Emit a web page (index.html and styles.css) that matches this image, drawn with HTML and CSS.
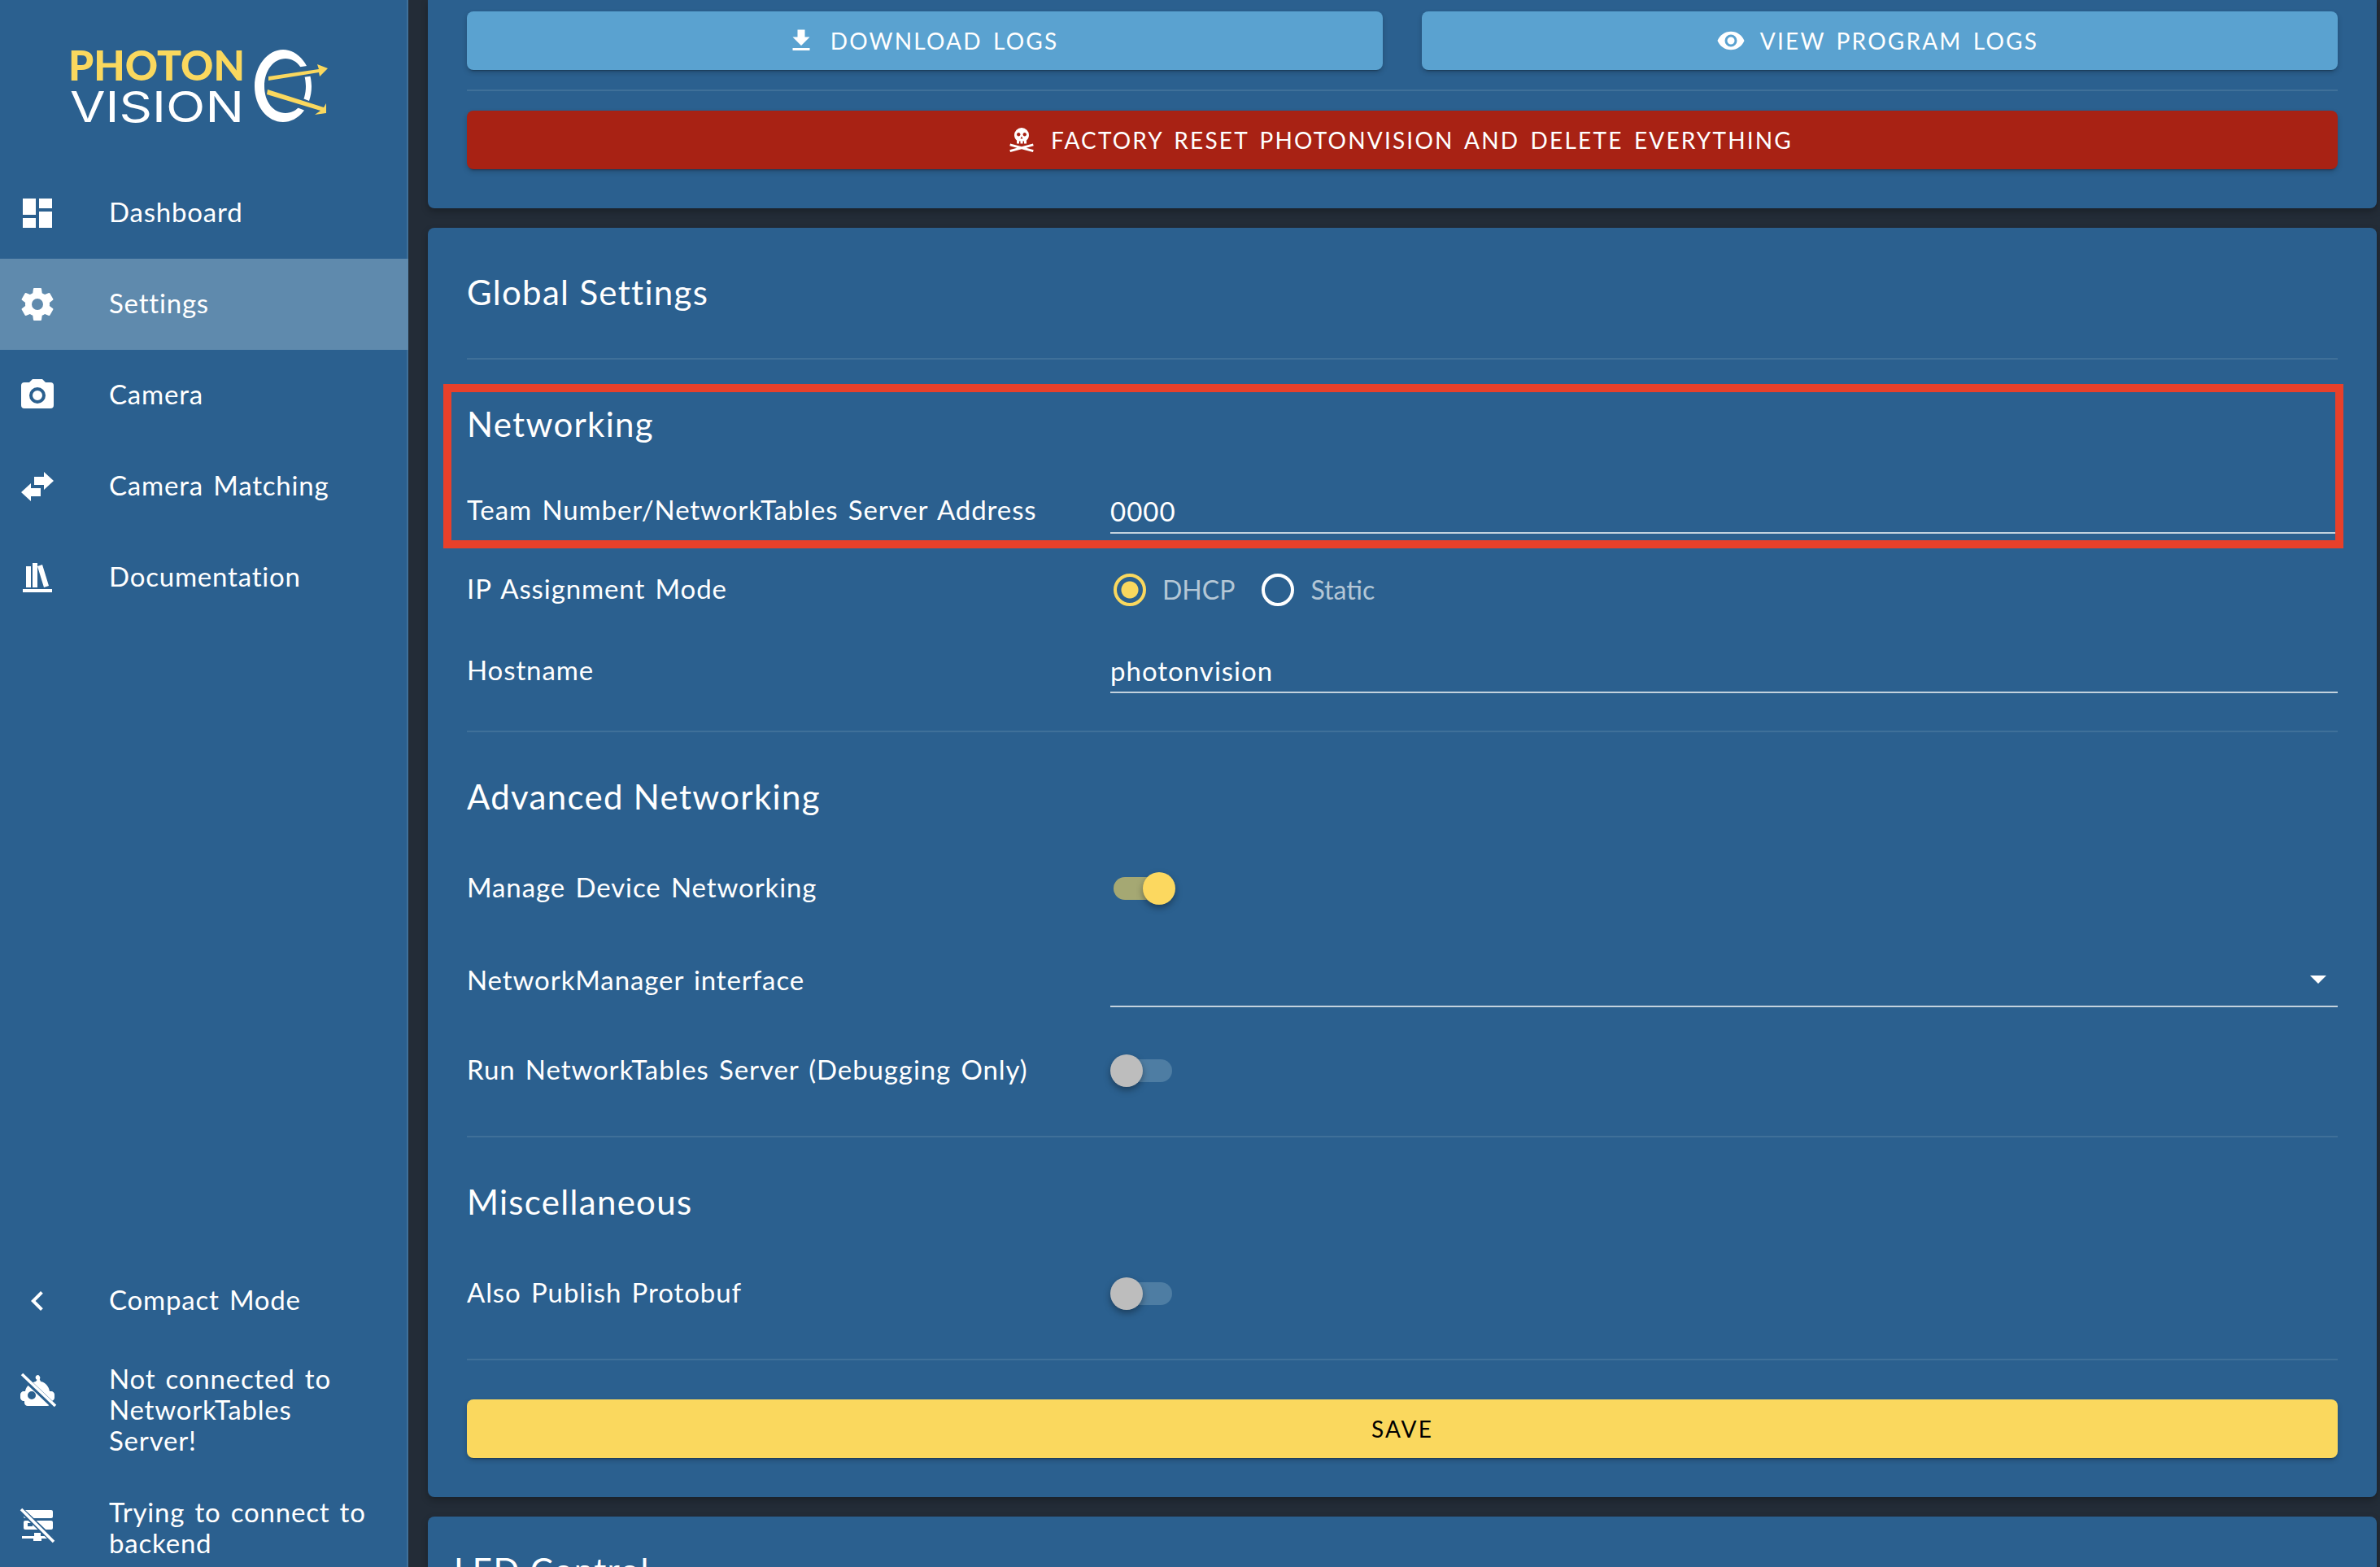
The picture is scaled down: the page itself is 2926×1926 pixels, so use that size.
FILE: index.html
```html
<!DOCTYPE html>
<html lang="en">
<head>
  <meta charset="UTF-8" />
  <title>Photon Client</title>
  <link rel="stylesheet" href="styles.css">
</head>
<body>
<div class="app">
  <nav class="sidebar">
    <div class="logo">
      <svg class="logo-svg" viewBox="0 0 320 90" width="320" height="90">
        <text class="logo-top" x="-1" y="38" textLength="217" lengthAdjust="spacingAndGlyphs">PHOTON</text>
        <text class="logo-bottom" x="1" y="89" textLength="214" lengthAdjust="spacingAndGlyphs">VISION</text>
        <path fill="#fff" fill-rule="evenodd" d="M263 0C244 0 228 20 228 45C228 70 244 89 263 89C282 89 298 70 298 45C298 20 282 0 263 0ZM266 11C281 11 291 26 291 45C291 64 281 78 266 78C251 78 240 64 240 45C240 26 251 11 266 11Z"/>
        <path stroke="#2b608f" stroke-width="13" d="M270 30L310 24M270 60L310 76"/>
        <path fill="#fad85e" d="M245 33L307 24L305 18L318 23L308 33L307 28L245 38ZM244 49L313 71L316 66L316 78L302 80L309 75L243 55Z"/>
      </svg>
    </div>
    <a class="nav-item">
      <svg class="nav-icon" viewBox="0 0 24 24"><path d="M13,3V9H21V3M13,21H21V11H13M3,21H11V15H3M3,13H11V3H3V13Z"/></svg>
      <span>Dashboard</span>
    </a>
    <a class="nav-item active">
      <svg class="nav-icon" viewBox="0 0 24 24"><path d="M12,15.5A3.5,3.5 0 0,1 8.5,12A3.5,3.5 0 0,1 12,8.5A3.5,3.5 0 0,1 15.5,12A3.5,3.5 0 0,1 12,15.5M19.43,12.97C19.47,12.65 19.5,12.33 19.5,12C19.5,11.67 19.47,11.34 19.43,11L21.54,9.37C21.73,9.22 21.78,8.95 21.66,8.73L19.66,5.27C19.54,5.05 19.27,4.96 19.05,5.05L16.56,6.05C16.04,5.66 15.5,5.32 14.87,5.07L14.5,2.42C14.46,2.18 14.25,2 14,2H10C9.75,2 9.54,2.18 9.5,2.42L9.13,5.07C8.5,5.32 7.96,5.66 7.44,6.05L4.95,5.05C4.73,4.96 4.46,5.05 4.34,5.27L2.34,8.73C2.21,8.95 2.27,9.22 2.46,9.37L4.57,11C4.53,11.34 4.5,11.67 4.5,12C4.5,12.33 4.53,12.65 4.57,12.97L2.46,14.63C2.27,14.78 2.21,15.05 2.34,15.27L4.34,18.73C4.46,18.95 4.73,19.03 4.95,18.95L7.44,17.94C7.96,18.34 8.5,18.68 9.13,18.93L9.5,21.58C9.54,21.82 9.75,22 10,22H14C14.25,22 14.46,21.82 14.5,21.58L14.87,18.93C15.5,18.67 16.04,18.34 16.56,17.94L19.05,18.95C19.27,19.03 19.54,18.95 19.66,18.73L21.66,15.27C21.78,15.05 21.73,14.78 21.54,14.63L19.43,12.97Z"/></svg>
      <span>Settings</span>
    </a>
    <a class="nav-item">
      <svg class="nav-icon" viewBox="0 0 24 24"><path fill-rule="evenodd" d="M4,4H7L9,2H15L17,4H20A2,2 0 0,1 22,6V18A2,2 0 0,1 20,20H4A2,2 0 0,1 2,18V6A2,2 0 0,1 4,4M12,7A5,5 0 0,0 7,12A5,5 0 0,0 12,17A5,5 0 0,0 17,12A5,5 0 0,0 12,7M12,9A3,3 0 0,1 15,12A3,3 0 0,1 12,15A3,3 0 0,1 9,12A3,3 0 0,1 12,9Z"/></svg>
      <span>Camera</span>
    </a>
    <a class="nav-item">
      <svg class="nav-icon" viewBox="0 0 24 24"><path d="M8,10V13H14V18H8V21L2,15.5L8,10M22,8.5L16,3V6H10V11H16V14L22,8.5Z"/></svg>
      <span>Camera Matching</span>
    </a>
    <a class="nav-item">
      <svg class="nav-icon" viewBox="0 0 24 24"><path d="M9 3V18H12V3H9M12 5L16 18L19 17L15 4L12 5M5 5V18H8V5H5M3 19V21H21V19H3Z"/></svg>
      <span>Documentation</span>
    </a>

    <div class="sidebar-footer">
      <a class="nav-item">
        <svg class="nav-icon" viewBox="0 0 24 24"><path d="M15.41,16.58L10.83,12L15.41,7.41L14,6L8,12L14,18L15.41,16.58Z"/></svg>
        <span>Compact Mode</span>
      </a>
      <div class="status-item status-nt">
        <svg class="nav-icon" viewBox="0 0 24 24">
          <path fill-rule="evenodd" d="M11.5 2.2A1.6 1.6 0 0 1 13.4 4.6L14 6C17 6.6 19 9 19.5 12H20.5C21.5 12 22.5 13 22.5 14V16C22.5 17 21.5 18 20.5 18H20V19C20 20.2 19 21 18 21H6C5 21 4 20.2 4 19V18H3.5C2.5 18 1.500 17 1.500 16V14C1.500 13 2.500 12 3.500 12H4.500C5 9 7.500 6.800 11 6L11.800 5A1.600 1.600 0 0 1 11.500 2.200ZM8.500 12A2.500 2.500 0 1 0 8.500 17A2.500 2.500 0 1 0 8.500 12Z"/>
          <path class="slash-gap" d="M2 2L22 21"/>
          <path class="slash" d="M2.500 1.500L23 21"/>
        </svg>
        <span>Not connected to NetworkTables Server!</span>
      </div>
      <div class="status-item status-backend">
        <svg class="nav-icon" viewBox="0 0 24 24">
          <path fill-rule="evenodd" d="M4.500 2H20.500A1 1 0 0 1 21.500 3V6A1 1 0 0 1 20.500 7H4.500A1 1 0 0 1 3.500 6V3A1 1 0 0 1 4.500 2ZM4.500 8.500H20.500A1 1 0 0 1 21.500 9.500V13A1 1 0 0 1 20.500 14H4.500A1 1 0 0 1 3.500 13V9.500A1 1 0 0 1 4.500 8.500ZM6 10V12H9V10ZM2.500 18H10V16H14V18H21.500V19.500H14.500V21H9.500V19.500H2.500Z"/>
          <path class="slash-gap" d="M2 2L22 21"/>
          <path class="slash" d="M2 1.500L22 21.500"/>
        </svg>
        <span>Trying to connect to backend</span>
      </div>
    </div>
  </nav>

  <main class="content">
    <section class="card card-top">
      <div class="btn-row">
        <button class="btn btn-blue">
          <svg class="btn-icon" viewBox="0 0 24 24"><path d="M5,20H19V18H5M19,9H15V3H9V9H5L12,16L19,9Z"/></svg>
          Download Logs
        </button>
        <button class="btn btn-blue">
          <svg class="btn-icon" viewBox="0 0 24 24"><path fill-rule="evenodd" d="M12,9A3,3 0 0,0 9,12A3,3 0 0,0 12,15A3,3 0 0,0 15,12A3,3 0 0,0 12,9M12,17A5,5 0 0,1 7,12A5,5 0 0,1 12,7A5,5 0 0,1 17,12A5,5 0 0,1 12,17M12,4.500C7,4.500 2.730,7.610 1,12C2.730,16.390 7,19.500 12,19.500C17,19.500 21.270,16.390 23,12C21.270,7.610 17,4.500 12,4.500Z"/></svg>
          View Program Logs
        </button>
      </div>
      <hr class="divider top-divider">
      <button class="btn btn-red">
        <svg class="btn-icon" viewBox="0 0 24 24"><path fill-rule="evenodd" d="M15.800,18.500L21.800,20.100L21.300,22L12,19.500L2.700,22L2.200,20.100L8.200,18.500L2.200,16.900L2.700,15L12,17.500L21.300,15L21.800,16.900L15.800,18.500M18,8C18,9.800 17.200,11.300 16,12.400V15H14V13H13V15H11V13H10V15H8V12.400C6.800,11.300 6,9.800 6,8A6,6 0 0,1 12,2A6,6 0 0,1 18,8M11,7.500C11,6.700 10.300,6 9.500,6C8.700,6 8,6.700 8,7.500C8,8.300 8.700,9 9.500,9C10.300,9 11,8.300 11,7.500M13,11L12,9L11,11H13M16,7.500C16,6.700 15.300,6 14.500,6C13.700,6 13,6.700 13,7.500C13,8.300 13.700,9 14.500,9C15.300,9 16,8.300 16,7.500Z"/></svg>
        Factory Reset PhotonVision and delete EVERYTHING
      </button>
    </section>

    <section class="card card-settings">
      <h2 class="card-title">Global Settings</h2>
      <hr class="divider">

      <div class="highlighted">
        <h3 class="section-title">Networking</h3>
        <div class="row row-team">
          <label class="row-label">Team Number/NetworkTables Server Address</label>
          <div class="text-field">0000</div>
        </div>
        <div class="annotation"></div>
      </div>

      <div class="row row-ip">
        <label class="row-label">IP Assignment Mode</label>
        <div class="radio-group">
          <span class="radio checked"></span><span class="radio-label">DHCP</span>
          <span class="radio"></span><span class="radio-label">Static</span>
        </div>
      </div>
      <div class="row row-host">
        <label class="row-label">Hostname</label>
        <div class="text-field">photonvision</div>
      </div>
      <hr class="divider divider-host">

      <h3 class="section-title section-sub">Advanced Networking</h3>
      <div class="row">
        <label class="row-label">Manage Device Networking</label>
        <span class="switch on"><span class="thumb"></span></span>
      </div>
      <div class="row row-select">
        <label class="row-label">NetworkManager interface</label>
        <div class="select-field"><span class="select-arrow"></span></div>
      </div>
      <div class="row">
        <label class="row-label">Run NetworkTables Server (Debugging Only)</label>
        <span class="switch"><span class="thumb"></span></span>
      </div>
      <hr class="divider divider-row">

      <h3 class="section-title section-sub">Miscellaneous</h3>
      <div class="row">
        <label class="row-label">Also Publish Protobuf</label>
        <span class="switch"><span class="thumb"></span></span>
      </div>
      <hr class="divider divider-row">

      <button class="btn btn-yellow">Save</button>
    </section>

    <section class="card card-led">
      <h2 class="led-title">LED Control</h2>
    </section>
  </main>
</div>
</body>
</html>
```

FILE: styles.css
```css
* {
  box-sizing: border-box;
}
html, body {
  margin: 0;
  height: 1926px;
  overflow: hidden;
}
body {
  font-family: 'Lato', 'Noto Sans', sans-serif;
  font-size: 33px;
  color: #fff;
  background: #232c37;
}
.app {
  display: flex;
  height: 1926px;
}

/* sidebar */
.sidebar {
  width: 502px;
  flex: none;
  display: flex;
  flex-direction: column;
  background: #2b608f;
  border-right: 2px solid #3f7099;
}
.logo {
  height: 206px;
  padding: 61px 0 0 85px;
}
.logo-svg {
  display: block;
  overflow: visible;
}
.logo-top {
  font-family: 'Lato', sans-serif;
  font-weight: 900;
  font-size: 51px;
  fill: #fad85e;
}
.logo-bottom {
  font-family: 'Inter', sans-serif;
  font-weight: 400;
  font-size: 52px;
  fill: #fff;
}
.nav-item {
  height: 112px;
  display: flex;
  align-items: center;
  gap: 64px;
  padding-left: 22px;
  letter-spacing: 0.8px;
  word-spacing: 3px;
}
.nav-item span {
  padding-bottom: 4px;
}
.nav-item.active {
  margin-right: -2px;
  background: #5f8aad;
}
.nav-icon {
  width: 48px;
  height: 48px;
  flex: none;
  fill: #fff;
}
.sidebar-footer {
  margin-top: auto;
  padding-bottom: 11px;
}
.status-item {
  display: flex;
  align-items: flex-start;
  gap: 64px;
  padding-left: 22px;
  line-height: 38px;
  letter-spacing: 0.8px;
  word-spacing: 3px;
}
.status-item span {
  width: 325px;
}
.status-nt {
  margin-top: 20px;
}
.status-nt .nav-icon {
  margin-top: 11px;
}
.status-backend {
  margin-top: 50px;
}
.status-backend .nav-icon {
  margin-top: 13px;
}
.slash {
  stroke: #fff;
  stroke-width: 1.8;
  fill: none;
}
.slash-gap {
  stroke: #2b608f;
  stroke-width: 3.4;
  fill: none;
}

/* main column */
.content {
  flex: 1;
  min-width: 0;
  padding: 0 4px 0 24px;
}
.card {
  background: #2b608f;
  border-radius: 8px;
  padding: 0 48px 48px;
  margin-bottom: 24px;
  box-shadow: 0 4px 8px rgba(0, 0, 0, 0.25);
}
.card-top {
  padding-top: 14px;
  border-radius: 0 0 8px 8px;
}
.btn-row {
  display: flex;
  gap: 48px;
}
.btn-row .btn {
  flex: 1;
}
.btn {
  height: 72px;
  width: 100%;
  display: flex;
  align-items: center;
  justify-content: center;
  gap: 18px;
  border: none;
  border-radius: 8px;
  font-family: inherit;
  font-size: 28px;
  text-transform: uppercase;
  letter-spacing: 2.2px;
  word-spacing: 4px;
  color: #fff;
  box-shadow: 0 4px 2px -3px rgba(0, 0, 0, 0.3), 0 3px 6px rgba(0, 0, 0, 0.2);
}
.btn-blue {
  padding: 0 6px 0 0;
  background: #5aa2d0;
}
.btn-red {
  padding: 0 6px 0 0;
  background: #a82214;
}
.btn-yellow {
  margin-top: 48px;
  background: #fad85e;
  color: #000;
}
.btn-icon {
  width: 36px;
  height: 36px;
  flex: none;
  fill: currentColor;
}
.divider {
  height: 2px;
  margin: 0;
  border: none;
  background: #3f7099;
}
.top-divider {
  margin: 24px 0;
}
.divider-host {
  margin-top: 46px;
}
.divider-row {
  margin-top: 24px;
}
.card-title {
  height: 160px;
  margin: 0;
  font-size: 42px;
  font-weight: 400;
  line-height: 158px;
  letter-spacing: 1.3px;
}
.section-title {
  margin: 0;
  padding: 55px 0;
  font-size: 42px;
  font-weight: 400;
  line-height: 48px;
  letter-spacing: 1.3px;
}
.section-sub {
  padding: 55px 0 33px;
}
.highlighted {
  position: relative;
}
.annotation {
  position: absolute;
  top: 30px;
  bottom: -18px;
  left: -29px;
  right: -7px;
  border: 10px solid #e8402a;
  pointer-events: none;
}

/* rows */
.row {
  height: 112px;
  display: flex;
  align-items: center;
}
.row-label {
  width: 791px;
  flex: none;
  padding-bottom: 4px;
  letter-spacing: 0.9px;
  word-spacing: 3px;
}
.row-team {
  height: 56px;
}
.row-ip {
  height: 138px;
}
.row-host {
  height: 58px;
  align-items: flex-start;
}
.row-host .row-label {
  line-height: 58px;
}
.row-host .text-field {
  padding-top: 4px;
}
.text-field {
  flex: 1;
  height: 100%;
  display: flex;
  align-items: center;
  padding-top: 2px;
  border-bottom: 2px solid #c3d2de;
  letter-spacing: 1px;
}
.radio-group {
  display: flex;
  align-items: center;
  padding-left: 4px;
}
.radio {
  width: 40px;
  height: 40px;
  border: 4px solid #fff;
  border-radius: 50%;
  flex: none;
}
.radio.checked {
  border-color: #fad85e;
  background: radial-gradient(circle, #fad85e 0 10px, transparent 11px);
}
.radio-label {
  margin: 0 33px 0 20px;
  padding-bottom: 2px;
  font-size: 32px;
  letter-spacing: 0;
  color: #b4c7d6;
}
.switch {
  position: relative;
  width: 80px;
  height: 40px;
  flex: none;
}
.switch::before {
  content: "";
  position: absolute;
  top: 6px;
  left: 4px;
  width: 72px;
  height: 28px;
  border-radius: 14px;
  background: #4e7da3;
}
.switch.on::before {
  background: #a5a873;
}
.thumb {
  position: absolute;
  top: 0;
  left: 0;
  width: 40px;
  height: 40px;
  border-radius: 50%;
  background: #bdbdbd;
  box-shadow: 0 4px 8px rgba(0, 0, 0, 0.35);
}
.switch.on .thumb {
  left: 40px;
  background: #fcd85f;
}
.row-select {
  align-items: flex-start;
}
.row-select .row-label {
  line-height: 112px;
}
.select-field {
  position: relative;
  flex: 1;
  height: 90px;
  border-bottom: 2px solid #c3d2de;
}
.select-arrow {
  position: absolute;
  right: 14px;
  top: 51px;
  border-style: solid;
  border-width: 10px 10px 0;
  border-color: #fff transparent transparent;
}
.led-title {
  margin: 0 0 0 -16px;
  padding-top: 42px;
  font-size: 42px;
  font-weight: 400;
  line-height: 48px;
  letter-spacing: 1.3px;
}
```
